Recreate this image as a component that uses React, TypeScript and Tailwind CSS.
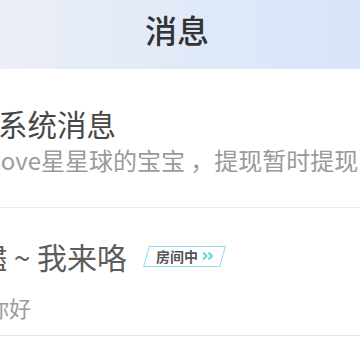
import React from "react";

const font = { fontFamily: '"Noto Sans CJK SC", "Noto Sans", sans-serif' };

function Badge() {
  return (
    <div className="relative ml-[19px] flex h-[21px] w-[77px] items-center pl-[10px]">
      <div className="absolute inset-0 -skew-x-[16deg] border-[1.5px] border-[#8edcec] bg-white" />
      <span className="relative text-[14px] font-bold leading-none text-[#555]">房间中</span>
      <svg className="relative ml-[3px]" width="14" height="10" viewBox="0 0 14 10">
        <path d="M2 1.5 L5.5 5 L2 8.5" fill="none" stroke="#63d2e8" strokeWidth="2" />
        <path d="M7.5 1.5 L11 5 L7.5 8.5" fill="none" stroke="#63d2e8" strokeWidth="2" />
      </svg>
    </div>
  );
}

export default function App() {
  return (
    <div className="h-[360px] w-[360px] overflow-hidden bg-white" style={font}>
      <div className="flex h-[69px] items-center justify-center bg-gradient-to-r from-[#ebeff6] to-[#d7e4fa] pb-[12px] pr-[6px]">
        <span className="text-[32px] font-medium leading-none text-[#333]">消息</span>
      </div>
      <div className="flex h-[139px] flex-col border-b border-[#ececec] pt-[40px]">
        <div className="ml-[-2px] whitespace-nowrap text-[29.5px] leading-[29px] text-[#474747]">系统消息</div>
        <div className="ml-[-6px] mt-[10px] whitespace-nowrap text-[24px] leading-[24px] text-[#9a9a9a]">
          love星星球的宝宝 ，提现暂时提现
        </div>
      </div>
      <div className="flex h-[128px] flex-col border-b border-[#e6e6e6] pt-[33px]">
        <div className="flex items-center">
          <span className="ml-[-23px] whitespace-nowrap text-[30px] leading-[30px] text-[#5c5c5c]">儘 ~ 我来咯</span>
          <Badge />
        </div>
        <div className="ml-[-13px] mt-[25px] whitespace-nowrap text-[22px] leading-[22px] text-[#9a9a9a]">你好</div>
      </div>
    </div>
  );
}
